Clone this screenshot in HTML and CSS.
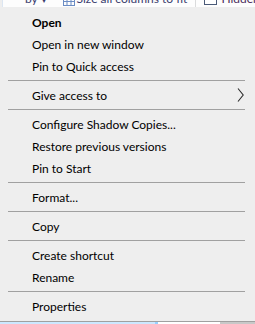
FILE: index.html
```html
<!DOCTYPE html>
<html lang="en">
<head>
    <meta charset="UTF-8">
    <meta name="viewport" content="width=device-width, initial-scale=1.0">
    <title>Context menu</title>
    <link rel="stylesheet" href="styles.css">
</head>
<body>
    <div class="ribbon">
        <span class="rb-text rb-sort">by &#9662;</span>
        <svg class="rb-grid" width="12" height="10" viewBox="0 0 12 10">
            <rect x="0.5" y="-3.5" width="11" height="9" fill="none" stroke="#6b8cc4"/>
            <path d="M4 -3 V5 M8 -3 V5 M0 1.5 H12" stroke="#6b8cc4"/>
        </svg>
        <span class="rb-text rb-size">Size all columns to fit</span>
        <span class="rb-sep"></span>
        <span class="rb-check"></span>
        <span class="rb-text rb-hidden">Hidden items</span>
    </div>

    <div class="menu">
        <div class="item bold">Open</div>
        <div class="item">Open in new window</div>
        <div class="item">Pin to Quick access</div>
        <div class="separator"></div>
        <div class="item">
            Give access to
            <svg class="chevron" width="7" height="14" viewBox="0 0 7 14">
                <path d="M1 0.5 L6.2 7 L1 13.5" fill="none" stroke="#2a2a2a" stroke-width="1.1"/>
            </svg>
        </div>
        <div class="separator"></div>
        <div class="item">Configure Shadow Copies...</div>
        <div class="item">Restore previous versions</div>
        <div class="item">Pin to Start</div>
        <div class="separator"></div>
        <div class="item">Format...</div>
        <div class="separator"></div>
        <div class="item">Copy</div>
        <div class="separator"></div>
        <div class="item">Create shortcut</div>
        <div class="item">Rename</div>
        <div class="separator"></div>
        <div class="item">Properties</div>
    </div>

    <div class="below">
        <span class="below-selected"></span>
        <span class="below-white"></span>
        <span class="below-gray"></span>
    </div>
</body>
</html>
```

FILE: styles.css
```css
* {
    margin: 0;
    padding: 0;
    box-sizing: border-box;
}

body {
    font-family: Lato, "Noto Sans", sans-serif;
    font-size: 12px;
    color: #000;
    background: #eeeeee;
    width: 255px;
    height: 324px;
    overflow: hidden;
}

/* explorer ribbon peeking above the menu */
.ribbon {
    height: 7px;
    background: #fdfdfd;
    display: flex;
    align-items: flex-start;
    overflow: hidden;
    border-left: 1px solid #dce6f2;
    margin-left: 2px;
}

.rb-text {
    line-height: 14px;
    margin-top: -8px;
    color: #3a3c6e;
    white-space: nowrap;
}

.rb-sort {
    margin-left: 22px;
}

.rb-grid {
    margin-left: 16px;
    flex-shrink: 0;
}

.rb-size {
    margin-left: 2px;
}

.rb-sep {
    width: 1px;
    height: 7px;
    background: #dadbdc;
    margin-left: 8px;
    flex-shrink: 0;
}

.rb-check {
    width: 13px;
    height: 13px;
    margin-top: -8px;
    margin-left: 8px;
    border: 1px solid #4a5a78;
    background: #fff;
    flex-shrink: 0;
}

.rb-hidden {
    margin-left: 4px;
    color: #4a2c5c;
}

.menu {
    padding: 4px 0;
    border-bottom: 1px solid #a0a0a0;
}

.item {
    height: 22px;
    padding-left: 32px;
    display: flex;
    align-items: center;
    white-space: nowrap;
}

.item.bold {
    font-weight: bold;
}

.chevron {
    margin-left: auto;
    margin-right: 11px;
}

.separator {
    height: 1px;
    margin: 3px 10px 3px 8px;
    background: #a0a0a0;
}

.below {
    display: flex;
    height: 2px;
}

.below-selected {
    width: 158px;
    background: #cce8ff;
    border-right: 3px solid #99d1ff;
}

.below-white {
    width: 62px;
    background: #fff;
}

.below-gray {
    flex: 1;
    background: #c8c8c8;
}
```
